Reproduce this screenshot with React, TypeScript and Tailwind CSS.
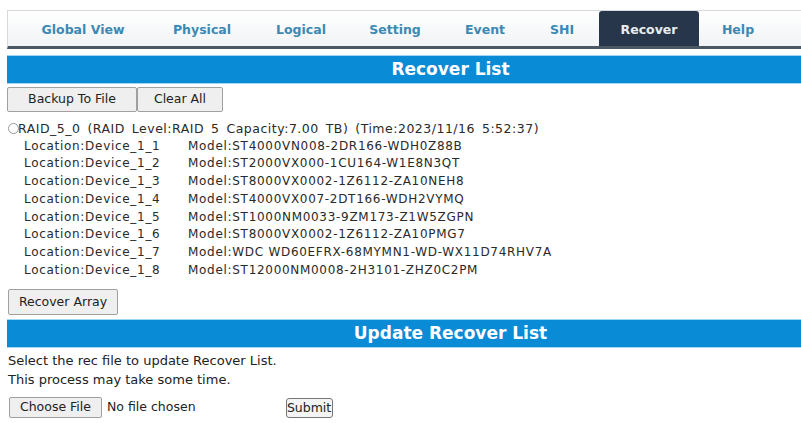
const tabs = [
  { label: 'Global View', w: 'w-[128px]' },
  { label: 'Physical', w: 'w-[110px]' },
  { label: 'Logical', w: 'w-[88px]' },
  { label: 'Setting', w: 'w-[100px]' },
  { label: 'Event', w: 'w-[80px]' },
  { label: 'SHI', w: 'w-[74px]' },
  { label: 'Recover', w: 'w-[100px]', active: true },
  { label: 'Help', w: 'w-[78px]' },
]

const disks = [
  ['Device_1_1', 'ST4000VN008-2DR166-WDH0Z88B'],
  ['Device_1_2', 'ST2000VX000-1CU164-W1E8N3QT'],
  ['Device_1_3', 'ST8000VX0002-1Z6112-ZA10NEH8'],
  ['Device_1_4', 'ST4000VX007-2DT166-WDH2VYMQ'],
  ['Device_1_5', 'ST1000NM0033-9ZM173-Z1W5ZGPN'],
  ['Device_1_6', 'ST8000VX0002-1Z6112-ZA10PMG7'],
  ['Device_1_7', 'WDC WD60EFRX-68MYMN1-WD-WX11D74RHV7A'],
  ['Device_1_8', 'ST12000NM0008-2H3101-ZHZ0C2PM'],
]

function Btn({ children, className = '' }: { children: React.ReactNode; className?: string }) {
  return (
    <button className={`bg-[#efefef] border border-[#a0a0a0] text-[12.5px] text-[#222] rounded-[2px] ${className}`}>
      {children}
    </button>
  )
}

function SectionBar({ title }: { title: string }) {
  return (
    <div className="h-[29px] bg-[#0a8bd6] border-y border-[#9fd6f2] flex items-center justify-center pl-[93px]">
      <span className="text-white font-bold text-[17px]">{title}</span>
    </div>
  )
}

export default function App() {
  return (
    <div className="w-[801px] h-[423px] overflow-hidden bg-white pl-[7px] pt-[10px] font-['DejaVu_Sans',sans-serif] text-[#222]">

      {/* Tabs */}
      <div className="h-[39px] border-t border-l border-[#d6dadd] border-b-[3px] border-b-[#4c5764] bg-gradient-to-b from-white to-[#f1f3f5] flex items-end pl-[11px]">
        {tabs.map(t => (
          <div
            key={t.label}
            className={`${t.w} shrink-0 h-[35px] flex items-center justify-center pt-[3px] text-[12.5px] font-bold ${
              t.active ? 'bg-[#27364a] text-[#e8edf2] rounded-t-[3px]' : 'text-[#3b89b4]'
            }`}
          >
            {t.label}
          </div>
        ))}
      </div>

      <div className="h-[6px]" />
      <SectionBar title="Recover List" />

      {/* Actions */}
      <div className="flex mt-[3px]">
        <Btn className="w-[130px] h-[25px]">Backup To File</Btn>
        <Btn className="w-[86px] h-[25px]">Clear All</Btn>
      </div>

      {/* Array */}
      <div className="mt-[8px] text-[12px] leading-[17.7px] tracking-[0.7px] text-[#2a2a2a]">
        <div className="flex items-center">
          <span className="inline-block w-[11px] h-[11px] rounded-full border border-[#999] ml-[1px] mr-[-1px]" />
          <span className="text-[12.5px] tracking-[0.5px] [word-spacing:2.5px]">RAID_5_0 (RAID Level:RAID 5 Capacity:7.00 TB) (Time:2023/11/16 5:52:37)</span>
        </div>
        {disks.map(([loc, model]) => (
          <div key={loc} className="flex pl-[17px]">
            <span className="w-[164px] shrink-0">Location:{loc}</span>
            <span>Model:{model}</span>
          </div>
        ))}
      </div>

      <Btn className="w-[110px] h-[26px] mt-[10px] ml-[1px]">Recover Array</Btn>

      <div className="h-[4px]" />
      <SectionBar title="Update Recover List" />

      {/* Upload */}
      <div className="text-[13px] leading-[19px] mt-[3px] pl-[1px]">
        <p>Select the rec file to update Recover List.</p>
        <p>This process may take some time.</p>
      </div>
      <div className="flex items-center mt-[8px] text-[12.5px]">
        <Btn className="w-[93px] h-[21px] ml-[2px]">Choose File</Btn>
        <span className="ml-[5px]">No file chosen</span>
        <button className="ml-[90px] w-[47px] h-[20px] border border-[#777] rounded-[3px] bg-[#f4f4f4] text-[12.5px]">Submit</button>
      </div>
    </div>
  )
}
